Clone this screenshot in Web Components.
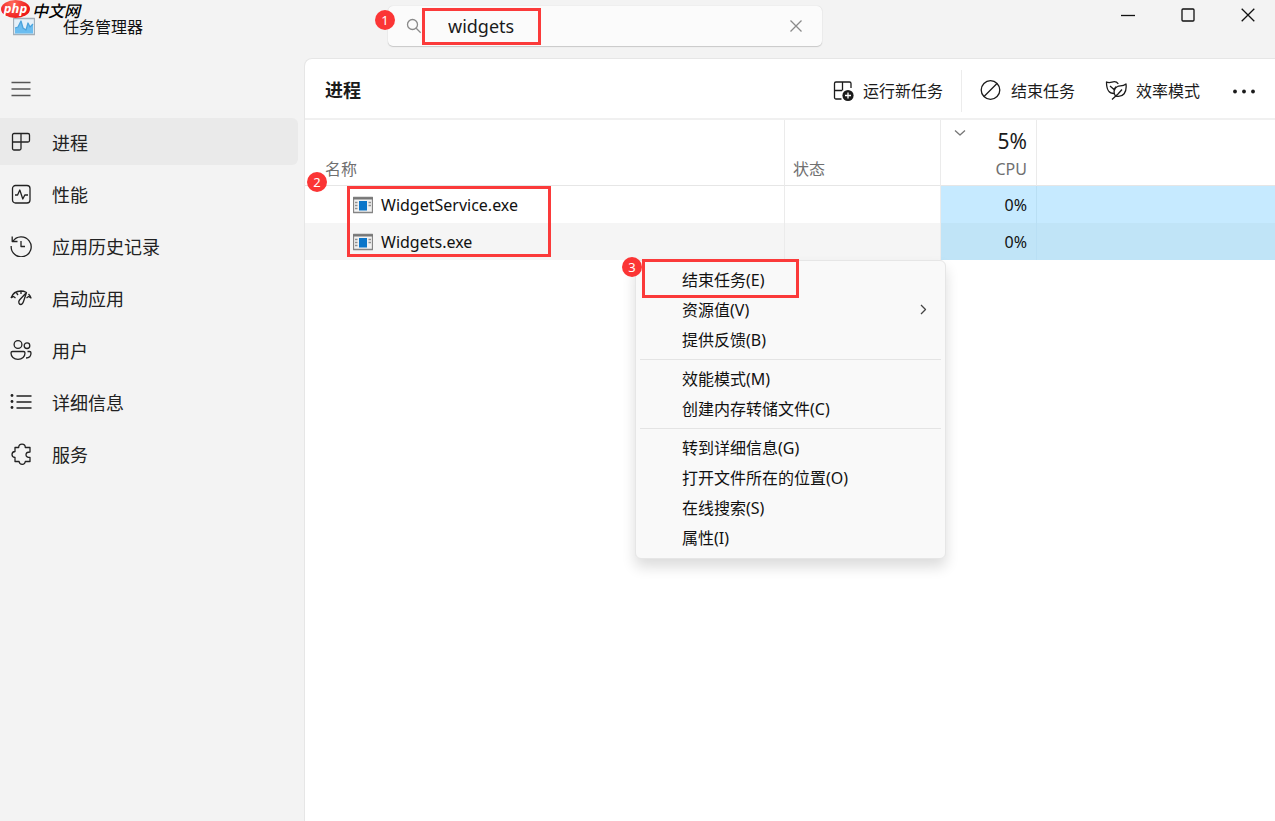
<!DOCTYPE html>
<html lang="zh-CN">
<head>
<meta charset="utf-8">
<meta name="viewport" content="width=device-width, initial-scale=1">
<title>任务管理器</title>
<style>
  body { margin: 0; background: #f3f3f3; color: #1b1b1b; font: 16px/22px "Noto Sans", "Noto Sans CJK SC", sans-serif; }
</style>
</head>
<body>
<tm-app></tm-app>
<script>
const ICONS = {
  menu: [22, '<path d="M1.500 4.500h19M1.500 11h19M1.500 17.500h19"/>'],
  processes: [22, '<path d="M4 2.500H18a1.500 1.500 0 0 1 1.500 1.500V9.500A1.500 1.500 0 0 1 18 11H11V17.500A1.500 1.500 0 0 1 9.500 19H4a1.500 1.500 0 0 1-1.500-1.500V4A1.500 1.500 0 0 1 4 2.500zM11 2.500V11M2.500 11H11"/>'],
  performance: [22, '<rect x="2.500" y="2.500" width="17.500" height="17.500" rx="3"/><path d="M5 12h2.600l2.200-5 3 9 2-4H18"/>'],
  history: [22, '<path d="M2.700 6.500A10 10 0 1 1 1.200 11M2.200 1.500V6.500H7.500M11 6v5.500h4"/>'],
  startup: [22, '<path d="M1 11C2.500 6.500 6.500 4 11 4c2 0 3.500.400 5 1.200M1 11l2.500-1.500 2 1.500M18.500 7c1.200 1.200 2 2.500 2.500 4l-2.500-1.500L16.500 11M11 4v3M6.500 6l1.500 2"/><path d="M16.500 5.500 9.500 13c-1.500 2-.5 4.500 1.200 4.500 1.800 0 2.300-1.500 2.800-3z"/>'],
  users: [22, '<circle cx="8" cy="5.500" r="3.900"/><circle cx="17" cy="6.700" r="2.800"/><path d="M2.500 12.500h11a1.500 1.500 0 0 1 1.500 1.500c0 3.500-2.700 6.300-7 6.300S1 17.500 1 14a1.500 1.500 0 0 1 1.500-1.500zM17.500 12.500h2a1.500 1.500 0 0 1 1.500 1.500c0 3.500-2 5-5 5"/>'],
  details: [22, '<path d="M6.500 5H21.500M6.500 11H21.500M6.500 17H21.500"/><g fill="currentColor" stroke="none"><circle cx="2" cy="4.500" r="1.400"/><circle cx="2" cy="10.500" r="1.400"/><circle cx="2" cy="16.500" r="1.400"/></g>'],
  services: [22, '<path d="M5 4.500h3.700C8.700 2.300 9.800 1.200 12 1.200s3.300 1.100 3.300 3.300H20V9c-2.600 0-4 1-4 2.700S17.400 14.400 20 14.400V18.500h-4.700c-.200 1.700-1.300 2.800-3 2.800s-3-1.100-3.200-2.800H5V14.500C3 14.300 2 13.200 2 11.500S3 8.700 5 8.500z"/>'],
  run: [22, '<path d="M9.500 19H4a1.500 1.500 0 0 1-1.500-1.500V3.500A1.500 1.500 0 0 1 4 2H17.500A1.500 1.500 0 0 1 19 3.500V8M10.500 2V10.500M2.500 10.500H10"/><circle cx="16" cy="15.500" r="5.600" fill="currentColor" stroke="none"/><path stroke="#fff" d="M16 12.500v6M13 15.500h6"/>'],
  end: [22, '<circle cx="10.500" cy="10" r="9.300"/><path d="M17 3.500 4 16.500"/>'],
  eco: [22, '<path d="M9 13.500C4.500 13.500 1.500 11 1.500 2 5 3.500 7 1.700 9.300 1.700c1.800 0 3 .8 4 2.200M5 6l4 3.500 2-3M7 19.500l6-5.500 4-4.500"/><path d="M10.500 16C8 12.500 9 8 12.500 6.500c2.500-1.200 5 .5 8.500-2.500C22 12 18.500 18 10.500 16z"/>'],
  more: [22, '<g fill="currentColor" stroke="none"><circle cx="2" cy="11.500" r="1.900"/><circle cx="11" cy="11.500" r="1.900"/><circle cx="20" cy="11.500" r="1.900"/></g>'],
  search: [16, '<circle cx="6.500" cy="6.500" r="5"/><path d="m10.200 10.200 4.500 4.500"/>'],
  clear: [14, '<path d="m1.500 1.500 11 11M12.500 1.500l-11 11"/>'],
  minimize: [14, '<path d="M0 7.500h14"/>'],
  maximize: [14, '<rect x="1" y="1" width="12" height="12" rx="1"/>'],
  close: [14, '<path d="m.7.7 12.600 12.600M13.300.7.7 13.300"/>'],
  down: [12, '<path d="m1 3.500 5 4.500 5-4.500"/>'],
  right: [12, '<path d="m3 1 4.500 4.500L3 10"/>'],
  app: [22, '<rect x=".5" y="2.500" width="21" height="16" fill="#e4f0f9" stroke="#a3afb9"/><path d="M2 17.500V12l3-1 3-6 2 7 3 2 2-7 2 4 3-3v9.500z" fill="#6bbdf0" stroke="none"/><path d="m2 12 3-1 3-6 2 7 3 2 2-7 2 4 3-3" stroke="#4ba3dc"/>'],
  exe: [20, '<rect x=".5" y="2.500" width="19" height="15" fill="#f2f2f2" stroke="#858585"/><path d="M0 3.500h20" stroke="#777" stroke-width="2"/><rect x="6" y="6" width="8" height="9.500" fill="#0c76c9" stroke="none"/><path d="M2 7.500h2.500M2 10.500h2.500M2 13.500h2.500M15.500 7.500H18M15.500 10.500H18" stroke="#909090"/>']
};

/* Registers an element whose shadow tree is cloned from a template. */
function define(tag, html, setup) {
  const template = document.createElement('template');
  template.innerHTML = html;
  customElements.define(tag, class extends HTMLElement {
    constructor() {
      super();
      this.attachShadow({ mode: 'open' }).append(template.content.cloneNode(true));
    }
    connectedCallback() { if (setup) setup(this, this.shadowRoot); }
  });
}

define('tm-icon', `<style>
  :host { display: inline-flex; flex: none; }
  svg { display: block; fill: none; stroke: currentColor; stroke-width: 1.3; stroke-linejoin: round; }
</style><svg aria-hidden="true"></svg>`, (host, root) => {
  const [size, body] = ICONS[host.getAttribute('name')];
  const svg = root.querySelector('svg');
  svg.setAttribute('viewBox', `0 0 ${size} ${size}`);
  svg.setAttribute('width', size);
  svg.setAttribute('height', size);
  svg.innerHTML = body;
});

/* Red frame and numbered badge that mark a tutorial step. */
define('step-frame', `<style>
  :host { display: block; position: absolute; box-sizing: border-box; border: 3px solid #fb3a3a; pointer-events: none; }
</style>`);
define('step-badge', `<style>
  :host { position: absolute; display: flex; align-items: center; justify-content: center; width: 20px; height: 20px; border-radius: 50%; background: #fb3535; color: #fff; font: 13px/20px "Noto Sans", sans-serif; }
</style><slot></slot>`);

define('site-mark', `<style>
  :host { position: absolute; top: 0; left: 1px; display: flex; gap: 2px; color: #000; font-style: italic; line-height: 18px; }
  .oval { width: 29px; height: 18px; border-radius: 50%; background: radial-gradient(circle at 40% 20%, #ff6a5a, #ee1a1a 70%); color: #fff; font: italic bold 13px/16px "Noto Sans", sans-serif; text-align: center; }
  .name { font: italic 500 16px/20px "Noto Sans CJK SC", sans-serif; }
</style><span class="oval">php</span><span class="name">中文网</span>`);

define('tm-search', `<style>
  :host { display: block; position: relative; flex: 0 1 434px; }
  label { display: flex; align-items: center; box-sizing: border-box; height: 40px; padding: 0 19px 0 18px; border-radius: 5px; background: #fbfbfb; box-shadow: 0 0 1px #c8c8c8, 0 1px 1px #c8c8c8; }
  tm-icon { color: #8a8a8a; }
  input { flex: 1; min-width: 0; margin: 0; padding: 0 26px; border: 0; outline: 0; background: none; color: #1b1b1b; font: 18px/24px "Noto Sans", sans-serif; }
  button { display: flex; padding: 0; border: 0; background: none; }
  step-frame { left: 34px; top: 2px; width: 119px; height: 37px; }
  step-badge { left: -13px; top: 4px; }
</style>
<label><tm-icon name="search"></tm-icon><input type="text" value="widgets" aria-label="搜索"><button aria-label="清除"><tm-icon name="clear"></tm-icon></button></label>
<step-frame></step-frame><step-badge>1</step-badge>`);

define('tm-titlebar', `<style>
  :host { display: flex; align-items: flex-start; position: relative; height: 58px; }
  .brand { display: flex; align-items: center; gap: 28px; box-sizing: border-box; flex: 0 0 388px; padding: 16px 0 0 13px; color: #111; }
  tm-search { margin-top: 6px; }
  .controls { display: flex; gap: 46px; margin-left: auto; padding: 8px 20px 0 40px; }
  button { display: flex; padding: 0; border: 0; background: none; color: #111; }
</style>
<div class="brand"><tm-icon name="app"></tm-icon><span>任务管理器</span></div>
<tm-search></tm-search>
<div class="controls">
  <button aria-label="最小化"><tm-icon name="minimize"></tm-icon></button>
  <button aria-label="最大化"><tm-icon name="maximize"></tm-icon></button>
  <button aria-label="关闭"><tm-icon name="close"></tm-icon></button>
</div>
<site-mark></site-mark>`);

define('tm-nav-item', `<style>
  :host { display: block; }
  a { display: flex; align-items: center; gap: 20px; height: 47px; padding-left: 10px; border-radius: 0 6px 6px 0; color: #222; text-decoration: none; font-size: 18px; line-height: 26px; }
  .label { padding-top: 2px; }
  :host([current]) a { background: #eaeaea; }
</style><a href="#"><slot name="icon"></slot><span class="label"><slot></slot></span></a>`, (host, root) => {
  if (host.hasAttribute('current')) root.querySelector('a').setAttribute('aria-current', 'page');
});

define('tm-nav', `<style>
  :host { display: block; box-sizing: border-box; flex: 0 0 304px; padding-right: 6px; }
  button { display: flex; padding: 20px 10px 18px; border: 0; background: none; color: #555; }
  nav { display: flex; flex-direction: column; gap: 5px; }
</style>
<button aria-label="导航"><tm-icon name="menu"></tm-icon></button>
<nav>
  <tm-nav-item current><tm-icon slot="icon" name="processes"></tm-icon>进程</tm-nav-item>
  <tm-nav-item><tm-icon slot="icon" name="performance"></tm-icon>性能</tm-nav-item>
  <tm-nav-item><tm-icon slot="icon" name="history"></tm-icon>应用历史记录</tm-nav-item>
  <tm-nav-item><tm-icon slot="icon" name="startup"></tm-icon>启动应用</tm-nav-item>
  <tm-nav-item><tm-icon slot="icon" name="users"></tm-icon>用户</tm-nav-item>
  <tm-nav-item><tm-icon slot="icon" name="details"></tm-icon>详细信息</tm-nav-item>
  <tm-nav-item><tm-icon slot="icon" name="services"></tm-icon>服务</tm-nav-item>
</nav>`);

define('tm-command', `<style>
  :host { display: block; }
  button { display: flex; align-items: center; gap: 9px; height: 40px; padding: 0 15px; border: 0; background: none; color: inherit; font: inherit; }
</style><button><slot name="icon"></slot><slot></slot></button>`);

define('tm-toolbar', `<style>
  :host { display: flex; align-items: center; box-sizing: border-box; height: 61px; padding: 4px 5px 0 20px; border-bottom: 2px solid #f0f0f0; }
  h1 { margin: 0 auto 0 0; padding-bottom: 2px; font-size: 18px; line-height: 26px; font-weight: 600; }
  .rule { width: 1px; height: 42px; margin: 0 3px; background: #ececec; }
  tm-command:last-child { margin-left: 3px; }
</style>
<h1>进程</h1>
<tm-command><tm-icon slot="icon" name="run"></tm-icon>运行新任务</tm-command>
<span class="rule"></span>
<tm-command><tm-icon slot="icon" name="end"></tm-icon>结束任务</tm-command>
<tm-command><tm-icon slot="icon" name="eco"></tm-icon>效率模式</tm-command>
<tm-command aria-label="更多"><tm-icon slot="icon" name="more"></tm-icon></tm-command>`);

define('tm-processes', `<style>
  :host { display: block; position: relative; }
  table { width: 100%; table-layout: fixed; border-collapse: separate; border-spacing: 0; }
  .name { width: 480px; } .status { width: 156px; } .cpu { width: 96px; }
  th, td { box-sizing: border-box; padding: 0 9px 0 8px; border-right: 1px solid #ebebeb; text-align: left; font-weight: 400; }
  th { height: 66px; padding-bottom: 5px; border-bottom: 1px solid #e6e6e6; color: #707070; vertical-align: bottom; }
  th:first-child { padding-left: 20px; }
  tr > :last-child { border-right: 0; }
  td { height: 37px; color: #111; }
  td:first-child { padding-left: 48px; }
  .file { display: flex; align-items: center; gap: 8px; }
  .load { text-align: right; }
  .total { display: flex; justify-content: space-between; padding: 0 0 3px 5px; color: #1b1b1b; font-size: 21px; line-height: 28px; }
  .total tm-icon { color: #777; }
  td.heat { background: #c6eaff; border-color: #b9dff4; text-align: right; }
  tr.hover td { background: #f5f5f5; }
  tr.hover td.heat { background: #c0e4f7; }
  step-frame { left: 42px; top: 66px; width: 204px; height: 71px; }
  step-badge { left: 2px; top: 52px; }
</style>
<table>
  <colgroup><col class="name"><col class="status"><col class="cpu"><col></colgroup>
  <thead><tr><th>名称</th><th>状态</th><th class="load"><div class="total"><tm-icon name="down"></tm-icon><span>5%</span></div>CPU</th><th></th></tr></thead>
  <tbody>
    <tr><td><div class="file"><tm-icon name="exe"></tm-icon>WidgetService.exe</div></td><td></td><td class="heat">0%</td><td class="heat"></td></tr>
    <tr class="hover"><td><div class="file"><tm-icon name="exe"></tm-icon>Widgets.exe</div></td><td></td><td class="heat">0%</td><td class="heat"></td></tr>
  </tbody>
</table>
<step-frame></step-frame><step-badge>2</step-badge>`);

define('tm-context-menu', `<style>
  :host { position: absolute; display: block; box-sizing: border-box; width: 311px; padding: 4px 4px 5px; border: 1px solid #e6e6e6; border-radius: 6px; background: #f9f9f9; box-shadow: 0 8px 14px rgba(0, 0, 0, .14); }
  button { display: flex; align-items: center; justify-content: space-between; width: 100%; height: 30px; padding: 0 11px 0 42px; border: 0; background: none; color: #111; font: inherit; }
  tm-icon { color: #444; }
  hr { height: 1px; margin: 4px 0; border: 0; background: #e4e4e4; }
  step-frame { left: 6px; top: -2px; width: 157px; height: 39px; }
  step-badge { left: -14px; top: -4px; }
</style>
<div role="menu">
  <button role="menuitem">结束任务(E)</button>
  <button role="menuitem">资源值(V)<tm-icon name="right"></tm-icon></button>
  <button role="menuitem">提供反馈(B)</button>
  <hr>
  <button role="menuitem">效能模式(M)</button>
  <button role="menuitem">创建内存转储文件(C)</button>
  <hr>
  <button role="menuitem">转到详细信息(G)</button>
  <button role="menuitem">打开文件所在的位置(O)</button>
  <button role="menuitem">在线搜索(S)</button>
  <button role="menuitem">属性(I)</button>
</div>
<step-frame></step-frame><step-badge>3</step-badge>`);

define('tm-app', `<style>
  :host { display: flex; flex-direction: column; min-height: 100vh; }
  .body { display: flex; flex: 1; }
  main { position: relative; flex: 1; min-width: 0; border: solid #e6e6e6; border-width: 1px 0 0 1px; border-radius: 8px 0 0 0; background: #fff; }
  tm-context-menu { left: 330px; top: 201px; }
</style>
<tm-titlebar></tm-titlebar>
<div class="body">
  <tm-nav></tm-nav>
  <main>
    <tm-toolbar></tm-toolbar>
    <tm-processes></tm-processes>
    <tm-context-menu></tm-context-menu>
  </main>
</div>`);
</script>
</body>
</html>
